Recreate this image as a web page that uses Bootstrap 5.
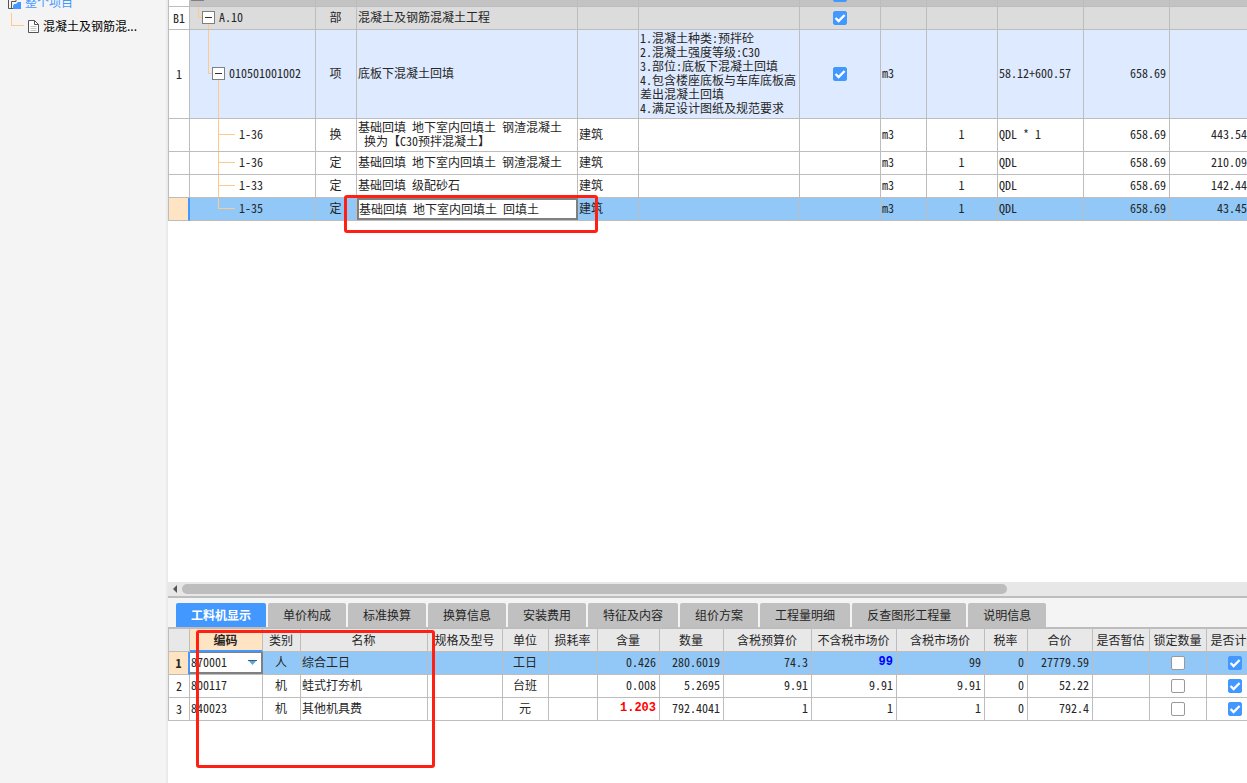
<!DOCTYPE html>
<html lang="zh-CN">
<head>
<meta charset="utf-8">
<meta name="viewport" content="width=device-width, initial-scale=1">
<title>工程量清单</title>
<link href="https://cdn.jsdelivr.net/npm/bootstrap@5.3.0/dist/css/bootstrap.min.css" rel="stylesheet">
<style>
  :root { --line:#bdbdbd; --blue:#4298ff; --tree:#ffc987; --pick:#91c8f7; --warm:#ffe4c4; --red:#ff2014; }
  body { font-family:"Noto Sans CJK SC","Liberation Sans",sans-serif; font-size:12px; line-height:14px; color:#262626; background:#fff; }
  .side { width:168px; background:#f4f4f4; border-right:2px solid #ebebeb; }
  .side ul { margin-top:-10px; }
  .side li { height:24px; }
  .side a { color:#000; text-decoration:none; white-space:nowrap; }
  .side .root a { color:var(--blue); }
  .side .elbow { width:13px; height:13px; margin-left:11px; margin-right:4px; margin-bottom:13px; border-left:1px solid var(--tree); border-bottom:1px solid var(--tree); }

  /* data grids */
  .sheet { table-layout:fixed; width:0; border-collapse:separate; border-spacing:0; font-feature-settings:"hwid"; border-left:1px solid var(--line); }
  .sheet th, .sheet td { border-right:1px solid var(--line); border-bottom:1px solid var(--line); padding:0 3px 2px 1px; height:23px; font-weight:400; vertical-align:middle; white-space:pre-wrap; }
  .sheet .num { text-align:center; padding:0; background:#fff; }
  .sheet .tick { padding:0; }
  .sheet .text-center { padding:0 1px 2px 0; }
  .sheet .form-check-input { width:14px; height:14px; border:1px solid #999; border-radius:2px; background-color:#fff; display:block; margin:0 auto; }
  .sheet .form-check-input:checked { background-color:var(--blue); border-color:var(--blue); background-image:url("data:image/svg+xml,%3csvg xmlns='http://www.w3.org/2000/svg' viewBox='0 0 14 14'%3e%3cpath fill='none' stroke='%23fff' stroke-width='2.4' d='M2.6 7l3 3 6-6'/%3e%3c/svg%3e"); background-size:14px; }
  .sheet .picked td { background-color:var(--pick); }
  .sheet .picked .num { background:var(--warm); border-right:2px solid var(--blue); }
  .sheet .changed { font-family:"Liberation Mono","Noto Sans CJK SC",monospace; font-weight:700; color:#f00; }
  .sheet .priced { color:#00f; }

  .bill { margin-top:-16px; }
  .bill .division td { background-color:#c3c3c3; }
  .bill .section td { background-color:#dcdcdc; }
  .bill .item td { background-color:#deeaff; height:89px; }
  .bill .tall td { height:33px; }
  .bill tr .num, .bill .item .num, .bill .section .num, .bill .division .num { background-color:#fff; }
  .bill .picked .num { background-color:var(--warm); }

  /* tree connectors of the code column */
  .sheet .tree { background-repeat:no-repeat; --v:linear-gradient(var(--tree),var(--tree)); }
  .sheet .t1 { padding-left:12px; background-image:var(--v),var(--v),var(--v); background-size:1px 11px,4px 1px,1px 6px; background-position:8px 0,8px 10px,18px 100%; }
  .sheet .t2 { padding-left:22px; background-image:var(--v),var(--v),var(--v); background-size:1px 44px,4px 1px,1px 39px; background-position:18px 0,18px 43px,28px 100%; }
  .sheet .t3 { padding-left:49px; background-image:var(--v),var(--v); background-size:1px 100%,17px 1px; background-position:28px 0,28px calc(50% - 1px); }
  .sheet .t3.end { background-size:1px 50%,17px 1px; }
  .fold { width:13px; height:13px; padding:0; border:1px solid #808080; background:#fff; flex:none; }
  .fold::after { content:""; display:block; width:7px; height:1px; background:#333; margin:0 auto; }
  .editor { border:2px solid #808080; background:#fff; color:#262626; font:inherit; font-feature-settings:"hwid"; width:100%; height:22px; padding:0 0 2px; border-radius:0; outline:0; display:block; }
  .sheet td.edit { padding:0; border-right:0; }
  .callout-box { position:absolute; border:3px solid var(--red); border-radius:3px; pointer-events:none; z-index:3; }
  .call-name { left:-13px; top:-3px; width:254px; height:38px; }
  .call-list { left:28px; top:32px; width:239px; height:138px; }

  .hbar { height:16px; background:#e7e7e7; border-bottom:2px solid var(--line); }
  .hbar .thumb { width:76.5%; height:10px; border-radius:5px; background:#bdbdbd; }
  .arrow { width:6px; height:8px; margin:0 4px; }

  .detail { height:185px; }
  .strip { background:#f4f4f4; padding:5px 8px 0; border-bottom:2px solid var(--line); height:31px; gap:2px; }
  .strip .nav-link { background:#c0c0c0; color:#262626; font-size:12px; line-height:24px; padding:0 15px; border:0; border-radius:2px 2px 0 0; white-space:nowrap; }
  .strip .nav-link.active { background:var(--blue); color:#fff; font-weight:700; }
  .res thead th { background:#e8e8e8; text-align:center; padding:0 1px 0 0; white-space:nowrap; }
  .res thead .on { background:var(--warm); font-weight:700; border-bottom:2px solid var(--blue); }
  .res .combo { border-left:0; appearance:none; padding-left:1px; border-width:1px 2px 2px 0; background:#fff url("data:image/svg+xml,%3csvg xmlns='http://www.w3.org/2000/svg' viewBox='0 0 9 5'%3e%3cpath fill='%235aa7d8' d='M0 0h9L4.500 5z'/%3e%3cpath fill='%23355f80' d='M0 0h9v1H0z'/%3e%3c/svg%3e") no-repeat right 4px center/9px 5px; }
</style>
</head>
<body class="vh-100 d-flex overflow-hidden">
<aside class="side flex-shrink-0 overflow-hidden">
  <ul class="list-unstyled mb-0">
    <li class="root d-flex align-items-center">
      <svg class="ms-2 me-1" width="13" height="13" viewBox="0 0 13 13"><path d="M.5 0v12.500H5M3.500 12V5.500H8V1" fill="none" stroke="#555"/><path d="M6 8h2l2-2h3v7H5v-3z" fill="#4298ff"/></svg>
      <a href="#">整个项目</a>
    </li>
    <li class="d-flex align-items-center">
      <span class="elbow"></span>
      <svg class="me-1" width="11" height="13" viewBox="0 0 11 13"><path d="M.5.5h6l4 4v8H.5z" fill="#fff" stroke="#555"/><path d="M6.500.500v4h4" fill="none" stroke="#555"/><path d="M2.500 6.500h6M2.500 8.500h6M2.500 10.500h6" stroke="#c8c8c8"/></svg>
      <a href="#">混凝土及钢筋混...</a>
    </li>
  </ul>
</aside>

<main class="flex-grow-1 d-flex flex-column overflow-hidden">
  <section class="flex-grow-1 overflow-hidden">
    <table class="sheet bill">
      <colgroup><col style="width:21px"><col style="width:126px"><col style="width:41px"><col style="width:221px"><col style="width:61px"><col style="width:161px"><col style="width:81px"><col style="width:46px"><col style="width:71px"><col style="width:86px"><col style="width:86px"><col style="width:81px"></colgroup>
      <tbody>
        <tr class="division"><td class="num"></td><td><button class="fold d-flex align-items-center" aria-label="折叠"></button></td><td></td><td></td><td></td><td></td><td class="tick"><input class="form-check-input" type="checkbox" checked aria-label="整个项目"></td><td></td><td></td><td></td><td></td><td></td></tr>
        <tr class="section"><td class="num">B1</td><td class="tree t1"><div class="d-flex align-items-center"><button class="fold d-flex align-items-center" aria-label="折叠"></button><span class="ms-1">A.10</span></div></td><td class="text-center">部</td><td>混凝土及钢筋混凝土工程</td><td></td><td></td><td class="tick"><input class="form-check-input" type="checkbox" checked aria-label="A.10"></td><td></td><td></td><td></td><td></td><td></td></tr>
        <tr class="item"><td class="num">1</td><td class="tree t2"><div class="d-flex align-items-center"><button class="fold d-flex align-items-center" aria-label="折叠"></button><span class="ms-1">010501001002</span></div></td><td class="text-center">项</td><td>底板下混凝土回填</td><td></td><td>1.混凝土种类:预拌砼
2.混凝土强度等级:C30
3.部位:底板下混凝土回填
4.包含楼座底板与车库底板高差出混凝土回填
4.满足设计图纸及规范要求</td><td class="tick"><input class="form-check-input" type="checkbox" checked aria-label="010501001002"></td><td>m3</td><td></td><td>58.12+600.57</td><td class="text-end">658.69</td><td></td></tr>
        <tr class="tall"><td class="num"></td><td class="tree t3">1-36</td><td class="text-center">换</td><td>基础回填 地下室内回填土 钢渣混凝土
 换为【C30预拌混凝土】</td><td>建筑</td><td></td><td></td><td>m3</td><td class="text-center">1</td><td>QDL * 1</td><td class="text-end">658.69</td><td class="text-end">443.54</td></tr>
        <tr><td class="num"></td><td class="tree t3">1-36</td><td class="text-center">定</td><td>基础回填 地下室内回填土 钢渣混凝土</td><td>建筑</td><td></td><td></td><td>m3</td><td class="text-center">1</td><td>QDL</td><td class="text-end">658.69</td><td class="text-end">210.09</td></tr>
        <tr><td class="num"></td><td class="tree t3">1-33</td><td class="text-center">定</td><td>基础回填 级配砂石</td><td>建筑</td><td></td><td></td><td>m3</td><td class="text-center">1</td><td>QDL</td><td class="text-end">658.69</td><td class="text-end">142.44</td></tr>
        <tr class="picked"><td class="num"></td><td class="tree t3 end">1-35</td><td class="text-center">定</td><td class="edit position-relative"><input class="editor" type="text" value="基础回填 地下室内回填土 回填土" aria-label="名称"><span class="callout-box call-name"></span></td><td>建筑</td><td></td><td></td><td>m3</td><td class="text-center">1</td><td>QDL</td><td class="text-end">658.69</td><td class="text-end">43.45</td></tr>
      </tbody>
    </table>
  </section>

  <div class="hbar d-flex align-items-center flex-shrink-0">
    <svg class="arrow" viewBox="0 0 6 8"><path d="M5 0v8L1 4z" fill="#555"/></svg>
    <div class="thumb"></div>
  </div>

  <section class="detail flex-shrink-0 position-relative">
    <nav class="strip nav flex-nowrap">
      <button class="nav-link active">工料机显示</button><button class="nav-link">单价构成</button><button class="nav-link">标准换算</button><button class="nav-link">换算信息</button><button class="nav-link">安装费用</button><button class="nav-link">特征及内容</button><button class="nav-link">组价方案</button><button class="nav-link">工程量明细</button><button class="nav-link">反查图形工程量</button><button class="nav-link">说明信息</button>
    </nav>
    <table class="sheet res">
      <colgroup><col style="width:21px"><col style="width:73px"><col style="width:38px"><col style="width:127px"><col style="width:75px"><col style="width:46px"><col style="width:49px"><col style="width:62px"><col style="width:64px"><col style="width:88px"><col style="width:85px"><col style="width:88px"><col style="width:43px"><col style="width:65px"><col style="width:57px"><col style="width:57px"><col style="width:57px"></colgroup>
      <thead><tr><th></th><th class="on">编码</th><th>类别</th><th>名称</th><th>规格及型号</th><th>单位</th><th>损耗率</th><th>含量</th><th>数量</th><th>含税预算价</th><th>不含税市场价</th><th>含税市场价</th><th>税率</th><th>合价</th><th>是否暂估</th><th>锁定数量</th><th>是否计价</th></tr></thead>
      <tbody>
        <tr class="picked"><td class="num fw-bold">1</td><td class="edit"><select class="editor combo" aria-label="编码"><option>870001</option></select></td><td class="text-center">人</td><td>综合工日</td><td></td><td class="text-center">工日</td><td></td><td class="text-end">0.426</td><td class="text-end">280.6019</td><td class="text-end">74.3</td><td class="text-end changed priced">99</td><td class="text-end">99</td><td class="text-end">0</td><td class="text-end">27779.59</td><td></td><td class="tick"><input class="form-check-input" type="checkbox" aria-label="锁定数量"></td><td class="tick"><input class="form-check-input" type="checkbox" checked aria-label="是否计价"></td></tr>
        <tr><td class="num">2</td><td>800117</td><td class="text-center">机</td><td>蛙式打夯机</td><td></td><td class="text-center">台班</td><td></td><td class="text-end">0.008</td><td class="text-end">5.2695</td><td class="text-end">9.91</td><td class="text-end">9.91</td><td class="text-end">9.91</td><td class="text-end">0</td><td class="text-end">52.22</td><td></td><td class="tick"><input class="form-check-input" type="checkbox" aria-label="锁定数量"></td><td class="tick"><input class="form-check-input" type="checkbox" checked aria-label="是否计价"></td></tr>
        <tr><td class="num">3</td><td>840023</td><td class="text-center">机</td><td>其他机具费</td><td></td><td class="text-center">元</td><td></td><td class="text-end changed">1.203</td><td class="text-end">792.4041</td><td class="text-end">1</td><td class="text-end">1</td><td class="text-end">1</td><td class="text-end">0</td><td class="text-end">792.4</td><td></td><td class="tick"><input class="form-check-input" type="checkbox" aria-label="锁定数量"></td><td class="tick"><input class="form-check-input" type="checkbox" checked aria-label="是否计价"></td></tr>
      </tbody>
    </table>
    <span class="callout-box call-list"></span>
  </section>
</main>
<script src="https://cdn.jsdelivr.net/npm/bootstrap@5.3.0/dist/js/bootstrap.bundle.min.js"></script>
</body>
</html>
